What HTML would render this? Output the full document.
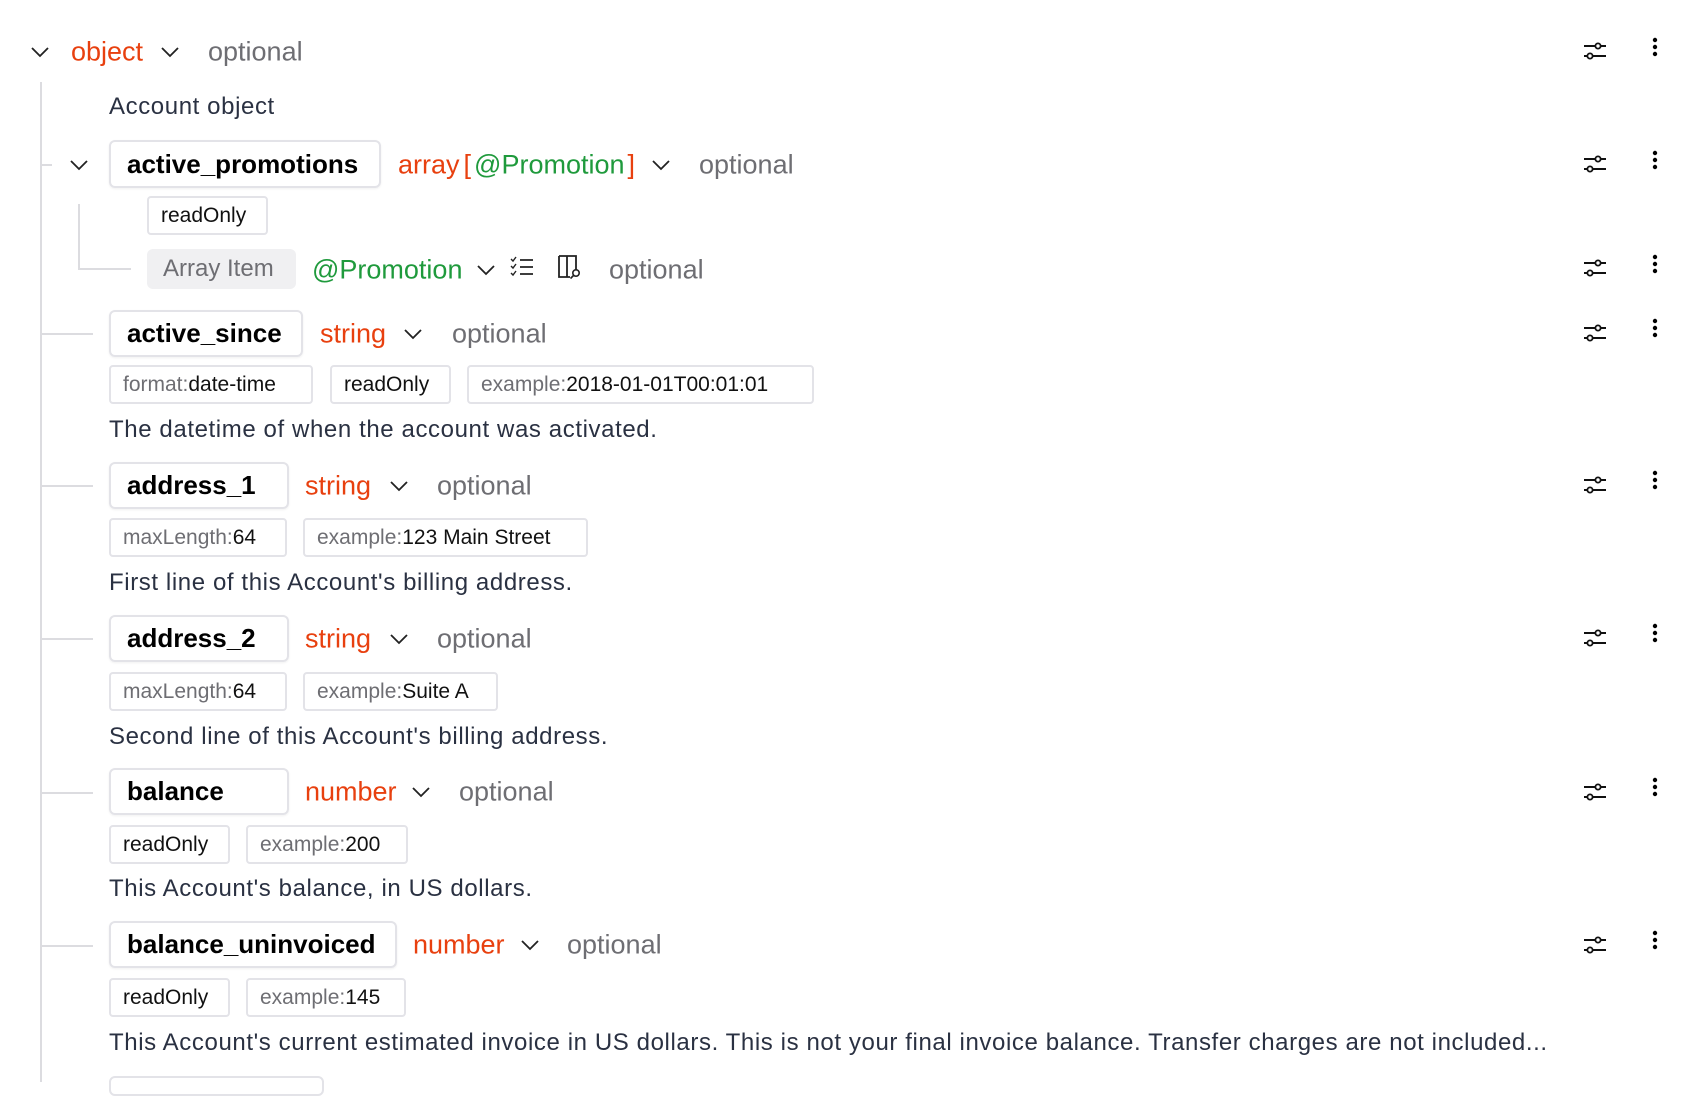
<!DOCTYPE html>
<html><head><meta charset="utf-8"><style>
*{margin:0;padding:0;box-sizing:border-box}
body{width:1702px;height:1082px;overflow:hidden;background:#fff;font-family:"Liberation Sans",sans-serif;position:relative}
.a{position:absolute;white-space:nowrap}
.t{transform:translateY(-50%)}
.red{color:#e8400f;font-size:27px}
.grn{color:#1f9a3c;font-size:27px}
.opt{color:#6e6e73;font-size:27px}
.name{border:2px solid #e3e3e8;border-radius:6px;font-weight:bold;font-size:26px;color:#000;padding-left:16px;display:flex;align-items:center;box-shadow:0 1px 2px rgba(0,0,0,.06)}
.chip{border:2px solid #e3e3e8;border-radius:4px;font-size:21px;color:#111;display:flex;align-items:center;padding-left:12px;height:39px}
.chip span{color:#6e6e73}
.desc{color:#2a3142;font-size:24px;letter-spacing:0.6px}
.vl{position:absolute;background:#dcdce0;width:2px}
.hl{position:absolute;background:#dcdce0;height:2px}
</style></head><body>
<svg width="0" height="0" style="position:absolute"><defs>
<symbol id="chev" viewBox="0 0 20 12"><path d="M2 2 L10 10 L18 2" fill="none" stroke="#222" stroke-width="1.8"/></symbol>
<symbol id="sl" viewBox="0 0 24 24"><path d="M1 7h12M17 7h6M1 17h4M9 17h14" stroke="#111" stroke-width="2"/><circle cx="15" cy="7" r="2.6" fill="#fff" stroke="#111" stroke-width="1.8"/><circle cx="7" cy="17" r="2.6" fill="#fff" stroke="#111" stroke-width="1.8"/></symbol>
<symbol id="dt" viewBox="0 0 6 24"><circle cx="3" cy="4" r="2.2"/><circle cx="3" cy="11" r="2.2"/><circle cx="3" cy="18" r="2.2"/></symbol>
</defs></svg>

<div class="vl" style="left:40px;top:82px;height:1000px"></div>
<div class="hl" style="left:40px;top:164px;width:12px"></div>
<div class="vl" style="left:78px;top:204px;height:66px"></div>
<div class="hl" style="left:78px;top:268px;width:53px"></div>
<div class="hl" style="left:40px;top:333px;width:53px"></div>
<div class="hl" style="left:40px;top:485px;width:53px"></div>
<div class="hl" style="left:40px;top:638px;width:53px"></div>
<div class="hl" style="left:40px;top:792px;width:53px"></div>
<div class="hl" style="left:40px;top:945px;width:53px"></div>

<svg class="a" style="left:30px;top:46px" width="20" height="12"><use href="#chev"/></svg>
<div class="a t red" style="left:71px;top:52px">object</div>
<svg class="a" style="left:160px;top:46px" width="20" height="12"><use href="#chev"/></svg>
<div class="a t opt" style="left:208px;top:52px">optional</div>
<div class="a t desc" style="left:109px;top:107px">Account object</div>

<svg class="a" style="left:69px;top:159px" width="20" height="12"><use href="#chev"/></svg>
<div class="a name" style="left:109px;top:140px;width:272px;height:48px">active_promotions</div>
<div class="a t" style="left:398px;top:165px;font-size:27px"><span class="red">array</span><span class="red" style="margin:0 3px 0 4px">[</span><span class="grn">@Promotion</span><span class="red" style="margin-left:3px">]</span></div>
<svg class="a" style="left:651px;top:159px" width="20" height="12"><use href="#chev"/></svg>
<div class="a t opt" style="left:699px;top:165px">optional</div>
<div class="a chip" style="left:147px;top:196px;width:121px">readOnly</div>
<div class="a" style="left:147px;top:249px;width:149px;height:40px;background:#f0f0f2;border-radius:6px;color:#6e6e73;font-size:24px;display:flex;align-items:center;padding-left:16px">Array Item</div>
<div class="a t grn" style="left:312px;top:270px">@Promotion</div>
<svg class="a" style="left:476px;top:264px" width="20" height="12"><use href="#chev"/></svg>
<svg class="a" style="left:510px;top:256px" width="24" height="22" viewBox="0 0 24 22"><path d="M1 3l2 2 3-4M1 10l2 2 3-4M1 17l2 2 3-4" fill="none" stroke="#222" stroke-width="1.4"/><path d="M10 4h13M10 11h13M10 18h13" stroke="#222" stroke-width="1.8"/></svg>
<svg class="a" style="left:556px;top:254px" width="28" height="26" viewBox="0 0 28 26"><path d="M3 2h17v14M3 2v21h11M11 2v21" fill="none" stroke="#222" stroke-width="1.8"/><circle cx="20" cy="19" r="3.2" fill="none" stroke="#222" stroke-width="1.6"/><path d="M17.5 21.5l-3 3" stroke="#222" stroke-width="1.6"/></svg>
<div class="a t opt" style="left:609px;top:270px">optional</div>

<div class="a name" style="left:109px;top:310px;width:194px;height:47px">active_since</div>
<div class="a t red" style="left:320px;top:334px">string</div>
<svg class="a" style="left:403px;top:328px" width="20" height="12"><use href="#chev"/></svg>
<div class="a t opt" style="left:452px;top:334px">optional</div>
<div class="a chip" style="left:109px;top:365px;width:204px"><span>format:</span>date-time</div>
<div class="a chip" style="left:330px;top:365px;width:121px">readOnly</div>
<div class="a chip" style="left:467px;top:365px;width:347px"><span>example:</span>2018-01-01T00:01:01</div>
<div class="a t desc" style="left:109px;top:430px">The datetime of when the account was activated.</div>

<div class="a name" style="left:109px;top:462px;width:180px;height:47px">address_1</div>
<div class="a t red" style="left:305px;top:486px">string</div>
<svg class="a" style="left:389px;top:480px" width="20" height="12"><use href="#chev"/></svg>
<div class="a t opt" style="left:437px;top:486px">optional</div>
<div class="a chip" style="left:109px;top:518px;width:178px"><span>maxLength:</span>64</div>
<div class="a chip" style="left:303px;top:518px;width:285px"><span>example:</span>123 Main Street</div>
<div class="a t desc" style="left:109px;top:583px">First line of this Account's billing address.</div>

<div class="a name" style="left:109px;top:615px;width:180px;height:47px">address_2</div>
<div class="a t red" style="left:305px;top:639px">string</div>
<svg class="a" style="left:389px;top:633px" width="20" height="12"><use href="#chev"/></svg>
<div class="a t opt" style="left:437px;top:639px">optional</div>
<div class="a chip" style="left:109px;top:672px;width:178px"><span>maxLength:</span>64</div>
<div class="a chip" style="left:303px;top:672px;width:195px"><span>example:</span>Suite A</div>
<div class="a t desc" style="left:109px;top:737px">Second line of this Account's billing address.</div>

<div class="a name" style="left:109px;top:768px;width:180px;height:47px">balance</div>
<div class="a t red" style="left:305px;top:792px">number</div>
<svg class="a" style="left:411px;top:786px" width="20" height="12"><use href="#chev"/></svg>
<div class="a t opt" style="left:459px;top:792px">optional</div>
<div class="a chip" style="left:109px;top:825px;width:121px">readOnly</div>
<div class="a chip" style="left:246px;top:825px;width:162px"><span>example:</span>200</div>
<div class="a t desc" style="left:109px;top:889px">This Account's balance, in US dollars.</div>

<div class="a name" style="left:109px;top:921px;width:288px;height:47px">balance_uninvoiced</div>
<div class="a t red" style="left:413px;top:945px">number</div>
<svg class="a" style="left:520px;top:939px" width="20" height="12"><use href="#chev"/></svg>
<div class="a t opt" style="left:567px;top:945px">optional</div>
<div class="a chip" style="left:109px;top:978px;width:121px">readOnly</div>
<div class="a chip" style="left:246px;top:978px;width:160px"><span>example:</span>145</div>
<div class="a t desc" style="left:109px;top:1043px">This Account's current estimated invoice in US dollars. This is not your final invoice balance. Transfer charges are not included...</div>
<div class="a" style="left:109px;top:1076px;width:215px;height:20px;border:2px solid #e3e3e8;border-radius:6px"></div>

<svg class="a" style="left:1583px;top:39px" width="24" height="24"><use href="#sl"/></svg>
<svg class="a" style="left:1652px;top:36px" width="6" height="24"><use href="#dt"/></svg>
<svg class="a" style="left:1583px;top:152px" width="24" height="24"><use href="#sl"/></svg>
<svg class="a" style="left:1652px;top:149px" width="6" height="24"><use href="#dt"/></svg>
<svg class="a" style="left:1583px;top:256px" width="24" height="24"><use href="#sl"/></svg>
<svg class="a" style="left:1652px;top:253px" width="6" height="24"><use href="#dt"/></svg>
<svg class="a" style="left:1583px;top:321px" width="24" height="24"><use href="#sl"/></svg>
<svg class="a" style="left:1652px;top:317px" width="6" height="24"><use href="#dt"/></svg>
<svg class="a" style="left:1583px;top:473px" width="24" height="24"><use href="#sl"/></svg>
<svg class="a" style="left:1652px;top:469px" width="6" height="24"><use href="#dt"/></svg>
<svg class="a" style="left:1583px;top:626px" width="24" height="24"><use href="#sl"/></svg>
<svg class="a" style="left:1652px;top:622px" width="6" height="24"><use href="#dt"/></svg>
<svg class="a" style="left:1583px;top:780px" width="24" height="24"><use href="#sl"/></svg>
<svg class="a" style="left:1652px;top:776px" width="6" height="24"><use href="#dt"/></svg>
<svg class="a" style="left:1583px;top:933px" width="24" height="24"><use href="#sl"/></svg>
<svg class="a" style="left:1652px;top:929px" width="6" height="24"><use href="#dt"/></svg>
</body></html>
